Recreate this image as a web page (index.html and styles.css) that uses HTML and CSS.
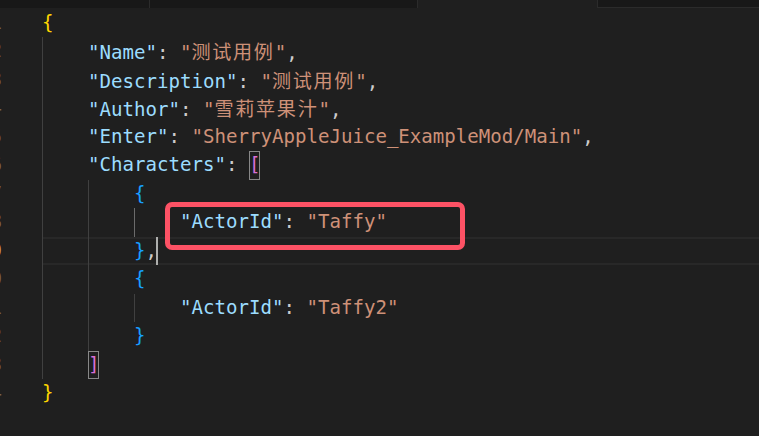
FILE: index.html
```html
<!DOCTYPE html>
<html lang="zh">
<head>
<meta charset="utf-8">
<title>JSON</title>
<link rel="stylesheet" href="styles.css">
</head>
<body>
<div class="tabs">
  <div class="tab t1"></div>
  <div class="tab t2"></div>
  <div class="tab active"></div>
  <div class="tab rest"></div>
</div>
<div class="editor">
  <div class="gutter">
    <div class="ln">1</div><div class="ln">2</div><div class="ln">3</div><div class="ln">4</div><div class="ln">5</div><div class="ln">6</div><div class="ln">7</div><div class="ln">8</div><div class="ln cur">9</div><div class="ln">10</div><div class="ln">11</div><div class="ln">12</div><div class="ln">13</div><div class="ln">14</div>
  </div>
  <div class="code">
    <div class="line"><span class="b1">{</span></div>
    <div class="line"><span class="ind">    </span><span class="k">"Name"</span><span class="p">: </span><span class="s">"<span class="cjk">测试用例</span>"</span><span class="p">,</span></div>
    <div class="line"><span class="ind">    </span><span class="k">"Description"</span><span class="p">: </span><span class="s">"<span class="cjk">测试用例</span>"</span><span class="p">,</span></div>
    <div class="line"><span class="ind">    </span><span class="k">"Author"</span><span class="p">: </span><span class="s">"<span class="cjk">雪莉苹果汁</span>"</span><span class="p">,</span></div>
    <div class="line"><span class="ind">    </span><span class="k">"Enter"</span><span class="p">: </span><span class="s">"SherryAppleJuice_ExampleMod/Main"</span><span class="p">,</span></div>
    <div class="line"><span class="ind">    </span><span class="k">"Characters"</span><span class="p">: </span><span class="b2 match">[</span></div>
    <div class="line"><span class="ind">    </span><span class="ind">    </span><span class="b3">{</span></div>
    <div class="line"><span class="ind">    </span><span class="ind">    </span><span class="ind on">    </span><span class="k">"ActorId"</span><span class="p">: </span><span class="s">"Taffy"</span></div>
    <div class="line current"><span class="ind">    </span><span class="ind">    </span><span class="b3">}</span><span class="p">,</span><span class="cursor"></span></div>
    <div class="line"><span class="ind">    </span><span class="ind">    </span><span class="b3">{</span></div>
    <div class="line"><span class="ind">    </span><span class="ind">    </span><span class="ind">    </span><span class="k">"ActorId"</span><span class="p">: </span><span class="s">"Taffy2"</span></div>
    <div class="line"><span class="ind">    </span><span class="ind">    </span><span class="b3">}</span></div>
    <div class="line"><span class="ind">    </span><span class="b2 match">]</span></div>
    <div class="line"><span class="b1">}</span></div>
  </div>
</div>
<div class="annot"></div>
</body>
</html>
```

FILE: styles.css
```css
html, body {
  margin: 0;
  padding: 0;
  background: #1f1f1f;
  overflow: hidden;
  height: 100%;
}

.tabs {
  display: flex;
  height: 7px;
  border-bottom: 1px solid #2b2b2b;
  background: #181818;
}
.tab {
  box-sizing: border-box;
  height: 8px;
  background: #181818;
  border-right: 1px solid #2b2b2b;
}
.t1 { width: 150px; }
.t2 { width: 268px; }
.tab.active {
  width: 180px;
  background: #1f1f1f;
  position: relative;
  z-index: 1;
}
.tab.rest { flex: 1; border-right: none; height: 7px; }

.editor {
  display: flex;
  padding-top: 0.5px;
  font-family: "DejaVu Sans Mono", "Liberation Mono", monospace;
  font-size: 19.1px;
  color: #cccccc;
}

.gutter {
  width: 42px;
  flex: none;
}
.ln {
  width: 2px;
  height: 28.5px;
  line-height: 28.5px;
  overflow: hidden;
  direction: rtl;
  white-space: nowrap;
  color: #7a6450;
}
.ln.cur { color: #c99a5c; }

.code {
  flex: 1;
  min-width: 0;
}
.line {
  height: 28.5px;
  line-height: 28.5px;
  white-space: pre;
}
.line.current {
  box-shadow: inset 0 2px 0 #282828, inset 0 -2px 0 #282828;
}

.ind {
  display: inline-block;
  height: 28.5px;
  vertical-align: top;
  box-shadow: inset 1px 0 0 #404040;
}
.ind.on { box-shadow: inset 1px 0 0 #6b6b6b; }

.k { color: #9cdcfe; }
.s { color: #ce9178; }
.p { color: #cccccc; }
.b1 { color: #ffd700; }
.b2 { color: #da70d6; }
.b3 { color: #179fff; }

.match {
  display: inline-block;
  height: 28.5px;
  vertical-align: top;
  box-shadow: inset 0 0 0 1px #888888;
}

.cjk {
  font-family: "Noto Sans CJK SC", sans-serif;
  letter-spacing: 1.7px;
}

.cursor {
  display: inline-block;
  width: 2px;
  height: 28px;
  margin-left: -1px;
  margin-right: -1px;
  vertical-align: top;
  background: #aeafad;
}

.annot {
  position: absolute;
  left: 165px;
  top: 202px;
  width: 300px;
  height: 48px;
  box-sizing: border-box;
  border: 5px solid #fd5265;
  border-radius: 7px;
}
```
